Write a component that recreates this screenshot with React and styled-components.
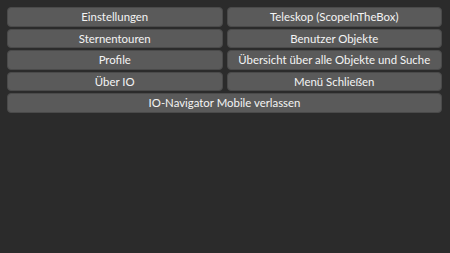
import React from "react";
import styled, { createGlobalStyle } from "styled-components";

const Global = createGlobalStyle`
  html, body { margin: 0; padding: 0; background: #2b2b2b; }
  body { width: 450px; height: 253px; overflow: hidden; }
  #root { width: 450px; height: 253px; }
`;

const Screen = styled.div`
  box-sizing: border-box;
  width: 450px;
  height: 253px;
  background: #2b2b2b;
  padding: 7px 8px 0 7px;
  font-family: "Segoe UI", Lato, "Noto Sans", sans-serif;
`;

const Grid = styled.div`
  display: grid;
  grid-template-columns: 1fr 1fr;
  grid-auto-rows: 19.75px;
  column-gap: 4px;
  row-gap: 1.75px;
`;

const MenuButton = styled.button`
  grid-column: ${(p) => (p.$wide ? "1 / span 2" : "auto")};
  box-sizing: border-box;
  margin: 0;
  padding: 0;
  background: #5a5a5a;
  border: 1px solid #4a4a4a;
  border-radius: 4px;
  color: #f4f4f4;
  font-family: inherit;
  font-size: 11.4px;
  font-weight: 400;
  line-height: 1;
  display: flex;
  align-items: center;
  justify-content: center;
  white-space: nowrap;
`;

const items = [
  "Einstellungen",
  "Teleskop (ScopeInTheBox)",
  "Sternentouren",
  "Benutzer Objekte",
  "Profile",
  "Übersicht über alle Objekte und Suche",
  "Über IO",
  "Menü Schließen",
];

export default function App() {
  return (
    <>
      <Global />
      <Screen>
        <Grid>
          {items.map((t) => (
            <MenuButton key={t}>{t}</MenuButton>
          ))}
          <MenuButton $wide>IO-Navigator Mobile verlassen</MenuButton>
        </Grid>
      </Screen>
    </>
  );
}
